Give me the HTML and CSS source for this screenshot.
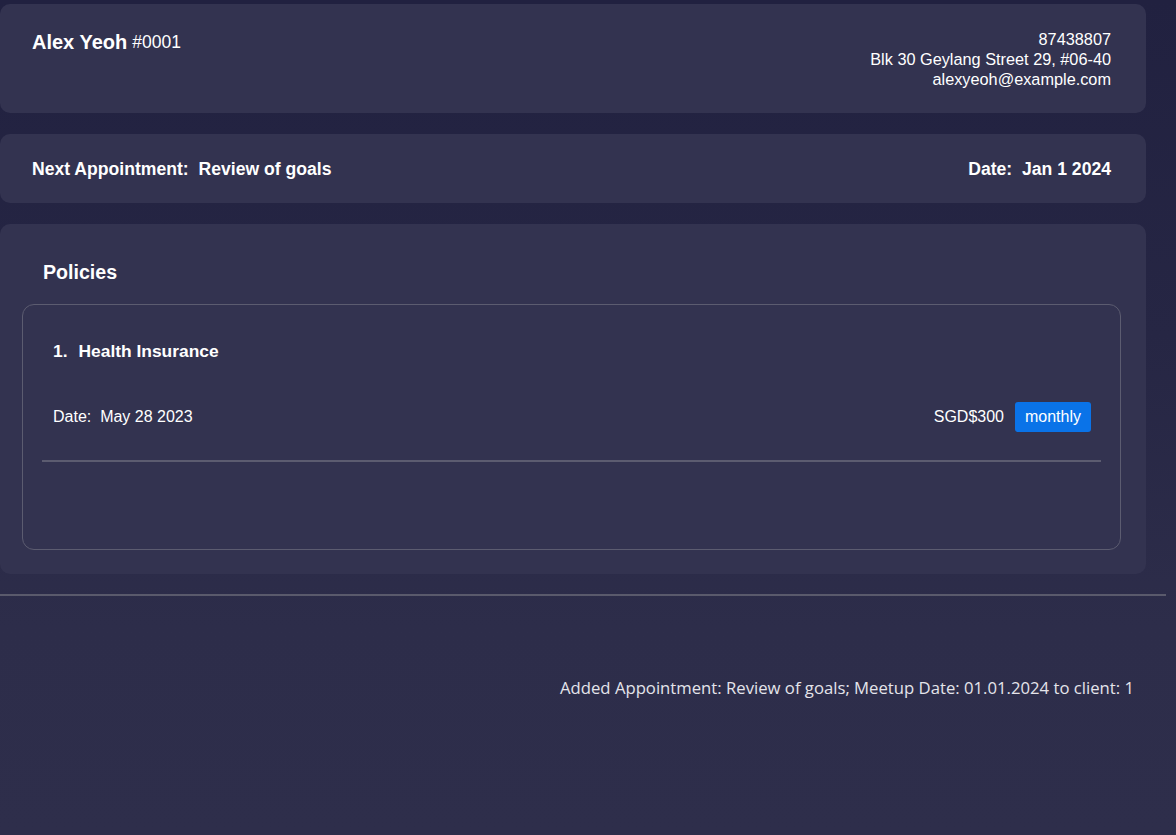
FILE: index.html
```html
<!DOCTYPE html>
<html>
<head>
<meta charset="utf-8">
<link rel="stylesheet" href="styles.css">
</head>
<body>
<div class="page">
  <div class="main">
    <section class="card client">
      <div class="name-row">
        <span class="name">Alex Yeoh</span>
        <span class="id">#0001</span>
      </div>
      <div class="contact">
        <div>87438807</div>
        <div>Blk 30 Geylang Street 29, #06-40</div>
        <div>alexyeoh@example.com</div>
      </div>
    </section>
    <section class="card appt">
      <span>Next Appointment:&nbsp; Review of goals</span>
      <span>Date:&nbsp; Jan 1 2024</span>
    </section>
    <section class="card policies">
      <h2 class="policies-title">Policies</h2>
      <div class="policy">
        <div class="policy-title"><span class="num">1.</span>Health Insurance</div>
        <div class="policy-row">
          <span>Date:&nbsp; May 28 2023</span>
          <div class="premium">
            <span>SGD$300</span>
            <span class="badge">monthly</span>
          </div>
        </div>
        <div class="policy-sep"></div>
      </div>
    </section>
  </div>
  <div class="status-line"></div>
  <div class="status">Added Appointment: Review of goals; Meetup Date: 01.01.2024 to client: 1</div>
</div>
</body>
</html>
```
FILE: styles.css
```css
html, body {
  margin: 0;
  padding: 0;
}
body {
  width: 1176px;
  height: 835px;
  overflow: hidden;
  background: linear-gradient(180deg, #212140 0%, #262644 40%, #2d2d4a 75%, #2e2e4b 100%);
  font-family: "Liberation Sans", Arial, sans-serif;
  color: #ffffff;
}
.page {
  display: flex;
  flex-direction: column;
}
.main {
  width: 1146px;
  padding-top: 4px;
  display: flex;
  flex-direction: column;
  gap: 21px;
}
.card {
  background: #333350;
  border-radius: 10px;
}
.client {
  height: 109px;
  box-sizing: border-box;
  padding: 25px 35px 0 32px;
  display: flex;
  justify-content: space-between;
  align-items: flex-start;
}
.name-row {
  display: flex;
  align-items: baseline;
  gap: 5px;
  margin-top: 2px;
}
.name {
  font-size: 20px;
  font-weight: bold;
}
.id {
  font-size: 17.5px;
  position: relative;
  top: -1.5px;
}
.contact {
  text-align: right;
  font-size: 16.3px;
  line-height: 20px;
}
.appt {
  height: 69px;
  box-sizing: border-box;
  padding: 2px 35px 0 32px;
  display: flex;
  justify-content: space-between;
  align-items: center;
  font-size: 17.6px;
  font-weight: bold;
}
.policies {
  height: 350px;
  box-sizing: border-box;
  padding: 0 25px 0 22px;
}
.policies-title {
  margin: 0;
  height: 80px;
  box-sizing: border-box;
  padding-left: 21px;
  padding-top: 36px;
  font-size: 19.6px;
  line-height: 24px;
  font-weight: bold;
}
.policy {
  height: 246px;
  box-sizing: border-box;
  border: 1px solid #5c5c70;
  border-radius: 12px;
  padding: 36px 19px 0 19px;
}
.policy-title {
  padding-left: 11px;
  font-size: 17.4px;
  font-weight: bold;
  line-height: 20px;
}
.num {
  margin-right: 11px;
}
.policy-row {
  margin-top: 41px;
  display: flex;
  justify-content: space-between;
  align-items: center;
  padding: 0 10px 0 11px;
  font-size: 16px;
}
.premium {
  display: flex;
  align-items: center;
  gap: 11px;
}
.badge {
  background: #0a73e8;
  border-radius: 3px;
  padding: 0 10px;
  height: 30px;
  line-height: 30px;
  font-size: 16px;
}
.policy-sep {
  margin-top: 28px;
  height: 2px;
  background: #5c5c70;
}
.status-line {
  margin-top: 20px;
  width: 1166px;
  height: 2px;
  background: #5a5a6c;
}
.status {
  width: 1134px;
  margin-top: 80px;
  text-align: right;
  font-family: "Open Sans", sans-serif;
  font-size: 16.7px;
  color: #e4e4ea;
}
```
